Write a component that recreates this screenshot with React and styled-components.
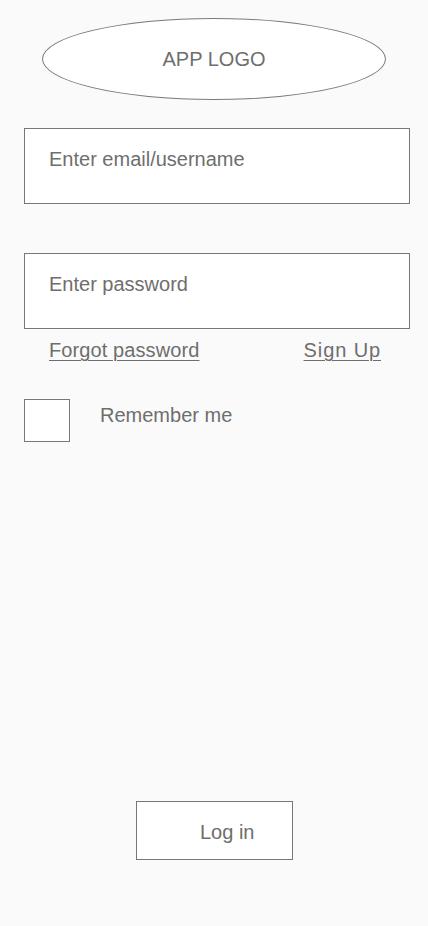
import React from "react";
import styled, { createGlobalStyle } from "styled-components";

const GlobalStyle = createGlobalStyle`
  html, body {
    margin: 0;
    padding: 0;
    background: #fafafa;
  }
  * {
    box-sizing: border-box;
  }
`;

const Page = styled.div`
  display: flex;
  flex-direction: column;
  min-height: 926px;
  width: 428px;
  padding: 18px 18px 66px 24px;
  font-family: "Liberation Sans", Arial, sans-serif;
  font-size: 20px;
  line-height: 24px;
  color: #6e6e6e;
`;

const Logo = styled.div`
  display: flex;
  align-items: center;
  justify-content: center;
  align-self: flex-start;
  margin-left: 18px;
  width: 344px;
  height: 82px;
  border: 1px solid #7a7a7a;
  border-radius: 50%;
  background: #ffffff;
`;

const Field = styled.div`
  margin-top: ${({ $top }) => $top}px;
  width: 386px;
  height: 76px;
  padding: 18px 24px 0;
  border: 1px solid #777777;
  background: #ffffff;
`;

const LinkRow = styled.div`
  display: flex;
  justify-content: space-between;
  margin-top: 9px;
  padding: 0 29px 0 25px;
`;

const TextLink = styled.a`
  color: #6e6e6e;
  text-decoration: underline;
  text-underline-offset: 3px;
  text-decoration-thickness: 1px;
  letter-spacing: ${({ $spacing }) => $spacing}px;
  cursor: pointer;
`;

const RememberRow = styled.label`
  display: flex;
  align-items: flex-start;
  gap: 30px;
  margin-top: 37px;
`;

const CheckBox = styled.span`
  display: block;
  width: 46px;
  height: 43px;
  border: 1px solid #777777;
  background: #ffffff;
`;

const RememberText = styled.span`
  margin-top: 4px;
`;

const LoginButton = styled.button`
  align-self: flex-start;
  margin-top: auto;
  margin-left: 112px;
  width: 157px;
  height: 59px;
  padding: 2px 0 0 63px;
  text-align: left;
  border: 1px solid #777777;
  background: #ffffff;
  font-family: inherit;
  font-size: 20px;
  line-height: 24px;
  color: #6e6e6e;
  cursor: pointer;
`;

export default function App() {
  return (
    <>
      <GlobalStyle />
      <Page>
        <Logo>APP LOGO</Logo>
        <Field $top={28}>Enter email/username</Field>
        <Field $top={49}>Enter password</Field>
        <LinkRow>
          <TextLink $spacing={0.1}>Forgot password</TextLink>
          <TextLink $spacing={0.9}>Sign Up</TextLink>
        </LinkRow>
        <RememberRow>
          <CheckBox />
          <RememberText>Remember me</RememberText>
        </RememberRow>
        <LoginButton>Log in</LoginButton>
      </Page>
    </>
  );
}
